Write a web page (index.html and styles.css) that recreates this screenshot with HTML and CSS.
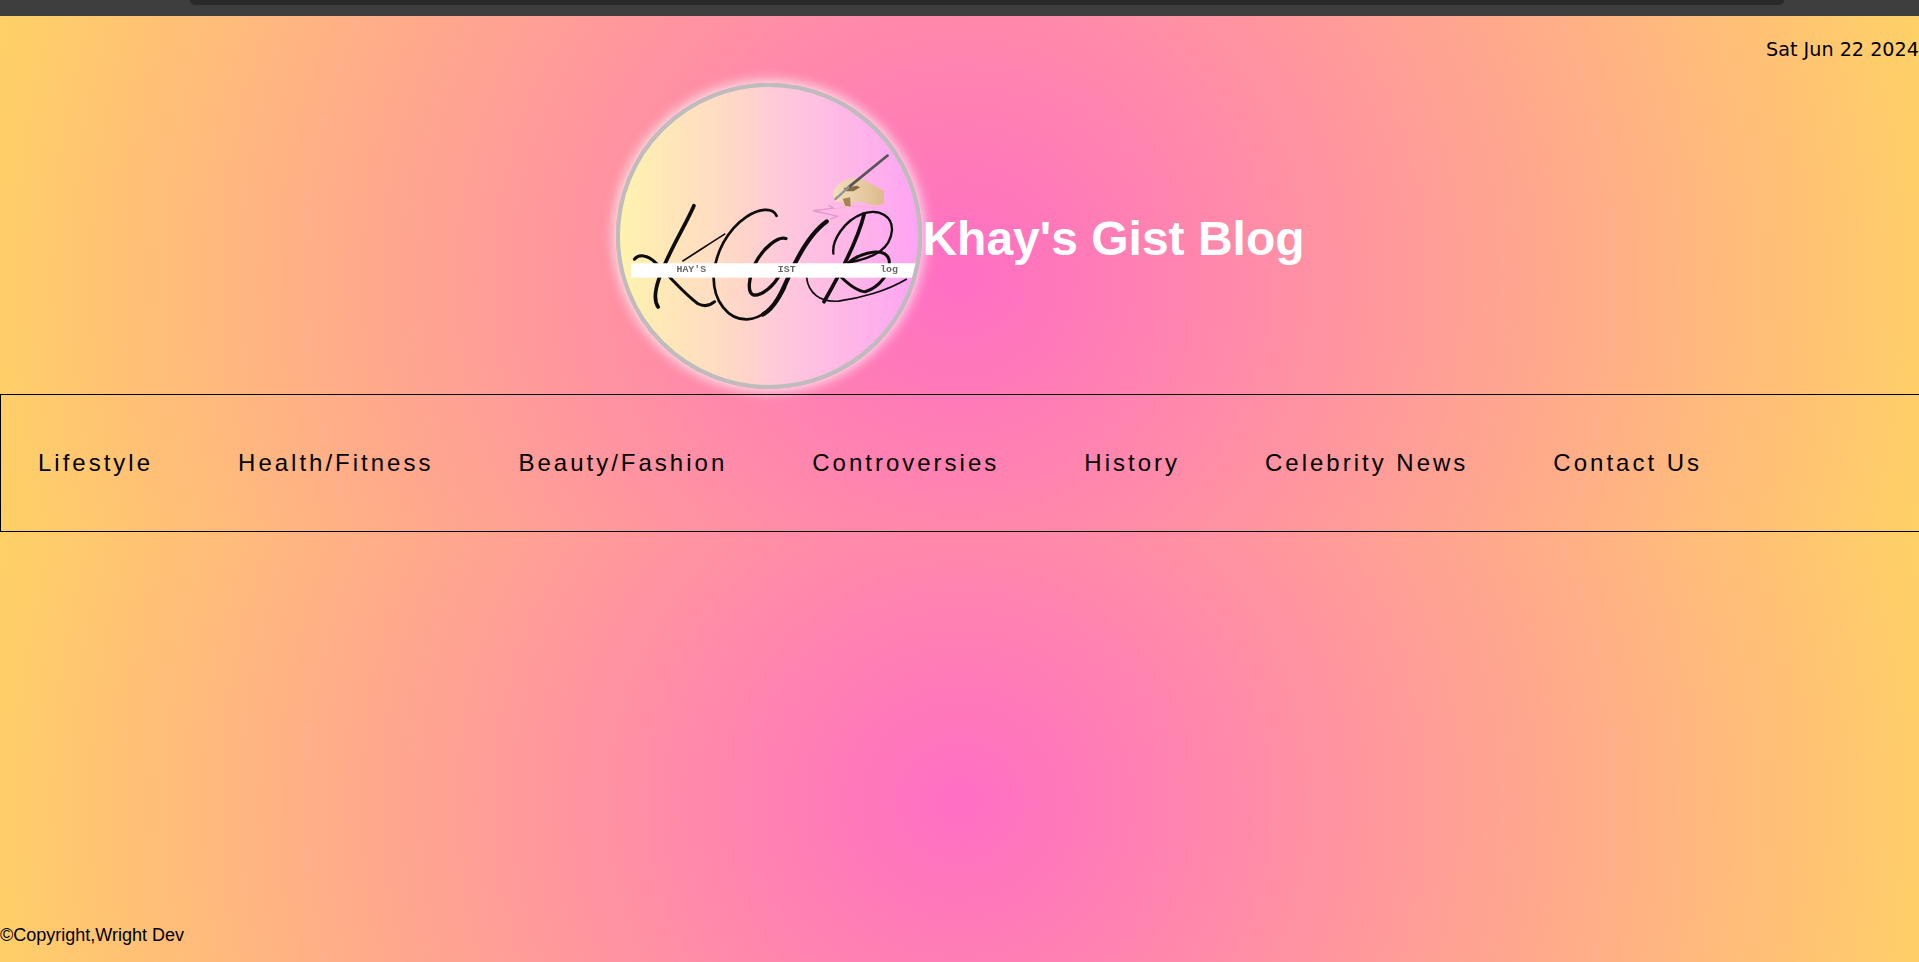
FILE: index.html
```html
<!DOCTYPE html>
<html lang="en">
<head>
<meta charset="utf-8">
<title>Khay's Gist Blog</title>
<link rel="stylesheet" href="styles.css">
</head>
<body>
<div class="chrome"><div class="chrome-tab"></div></div>
<div class="page">
  <div class="date">Sat Jun 22 2024</div>
  <header class="brand">
    <div class="logo">
      <svg class="logo-art" viewBox="62 50 891 891" aria-hidden="true">
        <defs>
          <filter id="soft" x="-5%" y="-5%" width="110%" height="110%"><feGaussianBlur stdDeviation="2.2"/></filter>
          <linearGradient id="skin" x1="0" x2="1" y1="0" y2="0">
            <stop offset="0" stop-color="#f3e0bd"/>
            <stop offset="1" stop-color="#dcbb8c"/>
          </linearGradient>
        </defs>
        <g filter="url(#soft)">
          <g fill="none" stroke="#0a0a0a" stroke-linecap="round" stroke-linejoin="round">
            <path stroke-width="11" d="M283 405C255 470 205 545 178 625C166 660 164 690 176 708"/>
            <path stroke-width="9" d="M105 565C118 548 145 552 168 575C205 610 250 665 295 698C315 708 330 705 345 692"/>
            <path stroke-width="5" d="M250 570C290 545 335 515 375 490"/>
            <path stroke-width="8" d="M530 435C520 410 480 412 440 438C385 475 345 545 342 620C342 690 385 745 440 745C495 742 530 700 555 650"/>
            <path stroke-width="13" d="M680 452C640 480 600 540 565 620C545 665 525 710 490 730"/>
            <path stroke-width="10" d="M558 503C535 495 490 530 465 580C448 620 440 665 462 672C490 675 525 640 540 610"/>
            <path stroke-width="7" d="M700 548C695 510 730 450 790 428C840 412 878 440 875 480C870 530 830 560 745 575"/>
            <path stroke-width="11" d="M792 430C775 500 725 600 672 692"/>
            <path stroke-width="9" d="M745 575C790 540 855 530 866 565C875 605 835 650 795 662C765 660 735 630 720 615"/>
            <path stroke-width="5" d="M620 620C625 665 660 695 715 690C780 682 860 660 918 625"/>
          </g>
          <path d="M698 368C710 335 745 316 780 324C805 332 830 350 851 360L851 400L820 405L790 394L755 394L752 410L733 407L725 392L706 394Z" fill="url(#skin)"/>
          <path d="M730 352L770 345L780 350L760 362L740 362Z" fill="#8a6a45"/>
          <path d="M728 384L750 380L752 408L735 405Z" fill="#a98255"/>
          <path d="M862 255L745 350" fill="none" stroke="#555" stroke-width="8" stroke-linecap="round"/>
          <path d="M745 350L706 385" fill="none" stroke="#8d949a" stroke-width="7" stroke-linecap="round"/>
          <path d="M685 403L700 412L640 420L712 436L690 446" fill="none" stroke="#e08cc8" stroke-width="4" opacity=".8"/>
          <path d="M700 415C740 405 790 405 830 412" fill="none" stroke="#f0a8d8" stroke-width="3" opacity=".6"/>
          <rect class="logo-band" x="95" y="577" width="852" height="43"/>
          <text class="logo-word" x="231" y="603">HAY'S</text>
          <text class="logo-word" x="534" y="603">IST</text>
          <text class="logo-word" x="840" y="603">log</text>
        </g>
      </svg>
    </div>
    <h1 class="title">Khay's Gist Blog</h1>
  </header>
  <nav class="nav">
    <a class="nav-link">Lifestyle</a>
    <a class="nav-link">Health/Fitness</a>
    <a class="nav-link">Beauty/Fashion</a>
    <a class="nav-link">Controversies</a>
    <a class="nav-link">History</a>
    <a class="nav-link">Celebrity News</a>
    <a class="nav-link">Contact Us</a>
  </nav>
  <main class="content"></main>
  <footer class="footer">©Copyright,Wright Dev</footer>
</div>
</body>
</html>
```
FILE: styles.css
```css
* { box-sizing: border-box; }
html, body { margin: 0; height: 100%; overflow: hidden; }
body {
  display: flex;
  flex-direction: column;
  font-family: "Liberation Sans", Arial, sans-serif;
  color: #000;
  background: #3e3e3e;
}
.chrome {
  height: 16px;
  flex: none;
  background: #3e3e3e;
  padding-left: 190px;
}
.chrome-tab {
  width: 1594px;
  height: 5px;
  background: #292929;
  border-radius: 0 0 14px 14px;
}
.page {
  flex: 1;
  display: flex;
  flex-direction: column;
  background-image: radial-gradient(circle, #ff6ec4, #ffd166);
  background-size: 100% 524px;
  background-repeat: repeat;
}
.date {
  font-family: "DejaVu Sans", sans-serif;
  font-size: 19.2px;
  line-height: 22px;
  text-align: right;
  white-space: nowrap;
  padding-top: 23px;
}
.brand {
  display: flex;
  justify-content: center;
  align-items: center;
  margin-top: 22px;
  padding-left: 2px;
}
.logo {
  width: 306px;
  height: 306px;
  flex: none;
  border-radius: 50%;
  border: 4px solid #bdbdbd;
  background: linear-gradient(90deg, #fff3ae 0%, #ffd6c8 40%, #ffc8dc 55%, #ffa4f4 100%);
  box-shadow: 0 0 12px 3px rgba(255, 255, 255, 0.75);
  overflow: hidden;
}
.logo-art { display: block; width: 298px; height: 298px; }
.logo-band { fill: #fff; }
.logo-word {
  font-family: "Liberation Mono", monospace;
  font-size: 29.5px;
  font-weight: 700;
  fill: #666;
}
.title {
  margin: 5px 0 0;
  font-size: 48px;
  font-weight: 700;
  color: #fff;
  white-space: nowrap;
}
.nav {
  display: flex;
  align-items: center;
  width: 1940px;
  height: 138px;
  margin-top: 5px;
  padding-left: 37px;
  gap: 85px;
  border: 1px solid #000;
  flex: none;
}
.nav-link {
  font-size: 24px;
  letter-spacing: 3px;
  white-space: nowrap;
  color: #000;
}
.content { flex: 1; }
.footer {
  font-size: 18px;
  line-height: 21px;
  padding-bottom: 16px;
}
```
